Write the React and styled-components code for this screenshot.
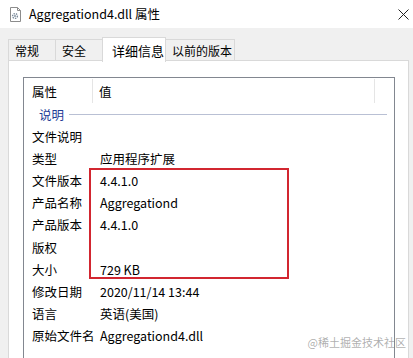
import React from 'react'
import styled, { createGlobalStyle } from 'styled-components'

const Global = createGlobalStyle`
  html, body { margin: 0; padding: 0; background: #f0f0f0; }
  body { font-family: "Noto Sans CJK SC", "Microsoft YaHei", sans-serif; font-size: 12px; color: #000; }
`

const Window = styled.div`
  position: relative;
  width: 413px;
  height: 358px;
  overflow: hidden;
  background: #f0f0f0;
`

const TitleBar = styled.div`
  height: 28px;
  background: #fff;
  display: flex;
  align-items: center;
  padding-left: 9px;
  gap: 7px;
  font-size: 12.5px;
`

const TitleText = styled.span`
  flex: 1;
  line-height: 1;
`

const Close = styled.div`
  width: 14px;
  height: 14px;
  margin-right: 3px;
  display: flex;
  align-items: center;
  justify-content: center;
`

const Body = styled.div`
  padding: 9px 4px 0 8px;
`

const Tabs = styled.div`
  display: flex;
  align-items: flex-end;
  height: 24px;
  position: relative;
  z-index: 1;
`

const Tab = styled.div`
  box-sizing: border-box;
  width: ${p => p.w}px;
  height: ${p => (p.active ? 25 : 22)}px;
  margin-left: ${p => (p.first ? 0 : -1)}px;
  margin-bottom: ${p => (p.active ? -1 : 0)}px;
  border: 1px solid #d9d9d9;
  border-bottom: ${p => (p.active ? 'none' : '1px solid #d9d9d9')};
  background: ${p => (p.active ? '#fff' : '#f0f0f0')};
  display: flex;
  align-items: ${p => (p.active ? 'flex-start' : 'center')};
  padding-top: ${p => (p.active ? 3 : 0)}px;
  padding-left: ${p => (p.active ? 9 : 6)}px;
  font-size: ${p => (p.active ? 13 : 12)}px;
  position: relative;
  z-index: ${p => (p.active ? 2 : 0)};
`

const Panel = styled.div`
  margin-top: -1px;
  height: 320px;
  background: #fff;
  border: 1px solid #d9d9d9;
  padding: 16px 0 0 14px;
`

const ListBox = styled.div`
  position: relative;
  width: 370px;
  height: 320px;
  border: 1px solid #828790;
  border-bottom: none;
`

const Header = styled.div`
  display: grid;
  grid-template-columns: 69px 282px;
  height: 25px;
`

const HeadCell = styled.div`
  border-right: 1px solid #e5e5e5;
  padding-left: ${p => (p.first ? 8 : 6)}px;
  display: flex;
  align-items: center;
  margin-top: 1px;
  height: 24px;
  font-size: 12.5px;
`

const Group = styled.div`
  display: flex;
  align-items: center;
  height: 22px;
  padding-left: 15px;
  color: #1e3c96;
  font-size: 12.5px;
`

const GroupLine = styled.div`
  width: 318px;
  height: 1px;
  background: #b9c0d4;
  margin-left: 5px;
  margin-top: 1px;
`

const Row = styled.div`
  display: grid;
  grid-template-columns: 69px 1fr;
  height: 22.2px;
  align-items: center;
  font-size: 12.5px;
`

const Label = styled.div`
  padding-left: 8px;
  white-space: nowrap;
`

const Value = styled.div`
  padding-left: 7px;
  white-space: nowrap;
`

const Highlight = styled.div`
  position: absolute;
  left: 65px;
  top: 90px;
  width: 196px;
  height: 107px;
  border: 2px solid #d22630;
`

const Watermark = styled.div`
  position: absolute;
  right: 7px;
  bottom: 8px;
  font-size: 11px;
  color: rgba(120, 120, 120, 0.6);
`

const FileIcon = () => (
  <svg width="13" height="15" viewBox="0 0 13 15">
    <path d="M1.5 0.5h7l3 3v11h-10z" fill="#fff" stroke="#8c8c8c" />
    <path d="M8.5 0.5v3h3" fill="none" stroke="#8c8c8c" />
    <circle cx="6" cy="9" r="2.4" fill="none" stroke="#7a8a9a" strokeWidth="1.4" strokeDasharray="1.3 0.9" />
    <circle cx="6" cy="9" r="0.9" fill="#7a8a9a" />
  </svg>
)

const rows = [
  ['文件说明', ''],
  ['类型', '应用程序扩展'],
  ['文件版本', '4.4.1.0'],
  ['产品名称', 'Aggregationd'],
  ['产品版本', '4.4.1.0'],
  ['版权', ''],
  ['大小', '729 KB'],
  ['修改日期', '2020/11/14 13:44'],
  ['语言', '英语(美国)'],
  ['原始文件名', 'Aggregationd4.dll'],
]

const tabs = [
  { label: '常规', w: 48 },
  { label: '安全', w: 48 },
  { label: '详细信息', w: 64, active: true },
  { label: '以前的版本', w: 70 },
]

export default function App() {
  return (
    <Window>
      <Global />
      <TitleBar>
        <FileIcon />
        <TitleText>Aggregationd4.dll 属性</TitleText>
        <Close>
          <svg width="11" height="11" viewBox="0 0 11 11">
            <path d="M0.5 0.5l10 10M10.5 0.5l-10 10" stroke="#222" strokeWidth="1" />
          </svg>
        </Close>
      </TitleBar>
      <Body>
        <Tabs>
          {tabs.map((t, i) => (
            <Tab key={t.label} w={t.w} active={t.active} first={i === 0}>{t.label}</Tab>
          ))}
        </Tabs>
        <Panel>
          <ListBox>
            <Header>
              <HeadCell first>属性</HeadCell>
              <HeadCell>值</HeadCell>
            </Header>
            <Group>说明<GroupLine /></Group>
            {rows.map(([k, v]) => (
              <Row key={k}>
                <Label>{k}</Label>
                <Value>{v}</Value>
              </Row>
            ))}
            <Highlight />
          </ListBox>
        </Panel>
      </Body>
      <Watermark>@稀土掘金技术社区</Watermark>
    </Window>
  )
}
